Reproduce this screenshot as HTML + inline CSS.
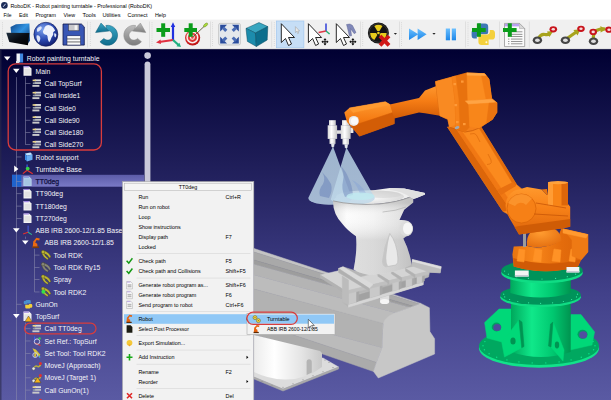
<!DOCTYPE html>
<html><head><meta charset="utf-8"><title>RoboDK - Robot painting turntable</title>
<style>
html,body{margin:0;padding:0;background:#fff;overflow:hidden}
svg{display:block}
text{font-family:"Liberation Sans", "DejaVu Sans", sans-serif;}
</style></head><body>
<svg width="611" height="400" viewBox="0 0 611 400">
<defs>
<linearGradient id="bg" x1="0" y1="49" x2="0" y2="400" gradientUnits="userSpaceOnUse">
<stop offset="0" stop-color="#000032"/><stop offset="0.32" stop-color="#1e1d58"/><stop offset="0.7" stop-color="#42418a"/><stop offset="1" stop-color="#5a5aa3"/></linearGradient>
</defs>
<rect x="0" y="0" width="611" height="400" fill="#ffffff"/>
<rect x="0" y="19.5" width="611" height="30" fill="#f0f0f0"/>
<rect x="0" y="49" width="611" height="351" fill="url(#bg)"/>
<defs>
<linearGradient id="gOr" x1="0" y1="0" x2="1" y2="1"><stop offset="0" stop-color="#ff9a2a"/><stop offset="1" stop-color="#e8690a"/></linearGradient>
<linearGradient id="gOrArm" x1="0" y1="0" x2="1" y2="0"><stop offset="0" stop-color="#d85f08"/><stop offset="0.45" stop-color="#ff8a1c"/><stop offset="1" stop-color="#f07410"/></linearGradient>
<linearGradient id="gTube" x1="0" y1="0" x2="0" y2="1"><stop offset="0" stop-color="#ff9a30"/><stop offset="0.5" stop-color="#f57c14"/><stop offset="1" stop-color="#d25c06"/></linearGradient>
<linearGradient id="gGreenCyl" x1="0" y1="0" x2="1" y2="0"><stop offset="0" stop-color="#00a85c"/><stop offset="0.35" stop-color="#10e88a"/><stop offset="0.7" stop-color="#00c870"/><stop offset="1" stop-color="#009450"/></linearGradient>
<linearGradient id="gWhiteCyl" x1="0" y1="0" x2="1" y2="0"><stop offset="0" stop-color="#d8d8d8"/><stop offset="0.4" stop-color="#ffffff"/><stop offset="1" stop-color="#c4c4c4"/></linearGradient>
<linearGradient id="gWhiteCyl2" x1="254" y1="0" x2="322" y2="0" gradientUnits="userSpaceOnUse"><stop offset="0" stop-color="#ececec"/><stop offset="0.3" stop-color="#ffffff"/><stop offset="0.7" stop-color="#e4e4e4"/><stop offset="1" stop-color="#c8c8c8"/></linearGradient>
<linearGradient id="gBowl" x1="0" y1="0" x2="1" y2="0"><stop offset="0" stop-color="#e6e6e6"/><stop offset="0.35" stop-color="#ffffff"/><stop offset="0.75" stop-color="#dcdcdc"/><stop offset="1" stop-color="#c0c0c0"/></linearGradient>
<linearGradient id="gCone" x1="0" y1="0" x2="0" y2="1"><stop offset="0" stop-color="#9fc8e6" stop-opacity="0.75"/><stop offset="1" stop-color="#7fa6d6" stop-opacity="0.6"/></linearGradient>
</defs>
<g id="scene">
<polygon points="254.0,248.5 420.8,303.4 419.3,304.0 254.0,252.0" fill="#c4c4c4" stroke="#c4c4c4" stroke-width="0.5" />
<polygon points="254.0,252.0 419.3,304.0 413.4,306.3 254.0,260.0" fill="#a9a9a9" stroke="#a9a9a9" stroke-width="0.5" />
<polygon points="254.0,260.0 413.4,306.3 410.4,307.4 254.0,264.3" fill="#9d9d9d" stroke="#9d9d9d" stroke-width="0.5" />
<polygon points="254.0,264.3 410.4,307.4 396.0,313.0 254.0,275.0" fill="#b4b4b4" stroke="#b4b4b4" stroke-width="0.5" />
<polygon points="254.0,275.0 396.0,313.0 383.6,324.0 254.0,289.0" fill="#bcbcbc" stroke="#bcbcbc" stroke-width="0.5" />
<polygon points="254.0,289.0 383.2,323.4 382.2,347.8 254.0,314.0" fill="#b2b2b2" stroke="#b2b2b2" stroke-width="0.5" />
<polygon points="254.0,314.0 382.2,347.8 376.5,362.5 254.0,322.0" fill="#bbbbbb" stroke="#bbbbbb" stroke-width="0.5" />
<polygon points="254.0,322.0 376.5,362.5 373.5,371.5 322.7,354.0 254.0,335.0" fill="#ababab" stroke="#ababab" stroke-width="0.5" />
<path d="M383.2,325 Q384,319 390,315.5 Q396,312.2 402,310.5 L420.8,303.4 L429.4,307.8 L429.9,331.6 L434.6,338.7 L434.6,354 L378.3,378 L373.5,371.5 L376.5,362.5 L382.2,347.8 Z" fill="#c7c7c7" stroke="#c7c7c7" stroke-width="0.5"/>
<polygon points="254.0,377.0 283.0,389.0 338.6,367.0 323.0,358.0 254.0,360.0" fill="#dcdcdc" stroke="#dcdcdc" stroke-width="0.5" />
<polygon points="254.0,379.0 283.0,391.0 338.6,369.0 338.6,367.0 283.0,389.0 254.0,377.0" fill="#aaaaaa" stroke="#aaaaaa" stroke-width="0.5" />
<circle cx="262.0" cy="381.5" r="0.55" fill="#8c8c8c"/>
<circle cx="272.0" cy="385.3" r="0.55" fill="#8c8c8c"/>
<circle cx="283.0" cy="387.3" r="0.55" fill="#8c8c8c"/>
<circle cx="293.0" cy="383.8" r="0.55" fill="#8c8c8c"/>
<circle cx="303.0" cy="379.8" r="0.55" fill="#8c8c8c"/>
<circle cx="313.0" cy="375.8" r="0.55" fill="#8c8c8c"/>
<circle cx="323.0" cy="371.8" r="0.55" fill="#8c8c8c"/>
<circle cx="333.0" cy="367.6" r="0.55" fill="#8c8c8c"/>
<circle cx="329.0" cy="362.5" r="0.55" fill="#8c8c8c"/>
<circle cx="325.0" cy="360.0" r="0.55" fill="#8c8c8c"/>
<path d="M254,335 L320,351 L322,353 L322,367 Q305,380 285,379.6 Q268,379 254,372 Z" fill="url(#gWhiteCyl2)" />
<path d="M306.6,362.5 Q306.6,359.2 309.2,359.2 Q311.8,359.2 311.8,362.5 L311.8,372.5 L306.6,375 Z" fill="#b4b4b4" />
<rect x="380" y="295" width="9.2" height="6.5" fill="#dedede"/>
<ellipse cx="384.6" cy="301.5" rx="4.6" ry="2.6" fill="#f6f6f6"/>
<polygon points="338.6,268.5 343.0,266.8 356.0,271.0 411.5,264.7 412.4,259.5 441.2,266.7 440.2,272.8 429.5,272.2 428.6,277.0 423.2,279.0 423.2,284.7 348.5,307.2 342.5,302.0 342.2,285.4 338.6,273.0" fill="#b6b6b6" stroke="#b6b6b6" stroke-width="0.5" />
<polygon points="343.0,300.0 348.5,304.5 423.2,282.0 419.0,278.0 352.0,296.0" fill="#c4c4c4" stroke="#c4c4c4" stroke-width="0.5" />
<polygon points="348.5,304.3 423.2,281.8 423.2,284.7 348.5,307.2" fill="#d6d6d6" stroke="#d6d6d6" stroke-width="0.5" />
<polygon points="349.0,297.5 422.0,276.0 422.5,281.8 349.0,304.0" fill="#a2a2a2" stroke="#a2a2a2" stroke-width="0.5" />
<polygon points="348.5,292.4 356.6,290.4 356.6,302.1 348.5,304.5" fill="#c9c9c9" stroke="#c9c9c9" stroke-width="0.5" />
<polygon points="356.6,290.4 358.8,289.4 358.8,300.5 356.6,302.1" fill="#a8a8a8" stroke="#a8a8a8" stroke-width="0.5" />
<polygon points="345.8,291.0 369.2,285.4 343.7,269.5 320.3,275.1" fill="#d4d4d4" stroke="#d4d4d4" stroke-width="0.5" />
<polygon points="345.8,291.0 369.2,285.4 369.2,288.6 345.8,294.2" fill="#c0c0c0" stroke="#c0c0c0" stroke-width="0.5" />
<polygon points="345.8,291.0 320.3,275.1 320.3,277.7 345.8,294.2" fill="#b2b2b2" stroke="#b2b2b2" stroke-width="0.5" />
<polygon points="370.0,287.2 380.0,284.8 380.0,295.1 370.0,298.1" fill="#c9c9c9" stroke="#c9c9c9" stroke-width="0.5" />
<polygon points="380.0,284.8 382.2,283.8 382.2,293.4 380.0,295.1" fill="#a8a8a8" stroke="#a8a8a8" stroke-width="0.5" />
<polygon points="367.4,285.8 387.2,281.1 375.3,273.6 355.5,278.4" fill="#d4d4d4" stroke="#d4d4d4" stroke-width="0.5" />
<polygon points="367.4,285.8 387.2,281.1 387.2,284.3 367.4,289.0" fill="#c0c0c0" stroke="#c0c0c0" stroke-width="0.5" />
<polygon points="367.4,285.8 355.5,278.4 355.5,281.0 367.4,289.0" fill="#b2b2b2" stroke="#b2b2b2" stroke-width="0.5" />
<polygon points="392.6,281.8 399.0,280.2 399.0,289.4 392.6,291.3" fill="#c9c9c9" stroke="#c9c9c9" stroke-width="0.5" />
<polygon points="399.0,280.2 401.2,279.2 401.2,287.8 399.0,289.4" fill="#a8a8a8" stroke="#a8a8a8" stroke-width="0.5" />
<polygon points="389.0,280.6 400.7,277.8 389.6,270.9 377.9,273.7" fill="#d4d4d4" stroke="#d4d4d4" stroke-width="0.5" />
<polygon points="389.0,280.6 400.7,277.8 400.7,281.0 389.0,283.8" fill="#c0c0c0" stroke="#c0c0c0" stroke-width="0.5" />
<polygon points="389.0,280.6 377.9,273.7 377.9,276.3 389.0,283.8" fill="#b2b2b2" stroke="#b2b2b2" stroke-width="0.5" />
<polygon points="406.0,278.6 412.4,277.0 412.4,285.3 406.0,287.2" fill="#c9c9c9" stroke="#c9c9c9" stroke-width="0.5" />
<polygon points="412.4,277.0 414.6,276.0 414.6,283.7 412.4,285.3" fill="#a8a8a8" stroke="#a8a8a8" stroke-width="0.5" />
<polygon points="401.6,277.6 414.2,274.6 404.0,268.2 391.4,271.2" fill="#d4d4d4" stroke="#d4d4d4" stroke-width="0.5" />
<polygon points="401.6,277.6 414.2,274.6 414.2,277.8 401.6,280.8" fill="#c0c0c0" stroke="#c0c0c0" stroke-width="0.5" />
<polygon points="401.6,277.6 391.4,271.2 391.4,273.8 401.6,280.8" fill="#b2b2b2" stroke="#b2b2b2" stroke-width="0.5" />
<polygon points="417.0,275.9 422.3,274.6 422.3,282.4 417.0,283.9" fill="#c9c9c9" stroke="#c9c9c9" stroke-width="0.5" />
<polygon points="422.3,274.6 424.5,273.6 424.5,280.8 422.3,282.4" fill="#a8a8a8" stroke="#a8a8a8" stroke-width="0.5" />
<polygon points="415.0,274.4 428.6,271.1 419.2,265.3 405.6,268.6" fill="#d4d4d4" stroke="#d4d4d4" stroke-width="0.5" />
<polygon points="415.0,274.4 428.6,271.1 428.6,274.3 415.0,277.6" fill="#c0c0c0" stroke="#c0c0c0" stroke-width="0.5" />
<polygon points="415.0,274.4 405.6,268.6 405.6,271.2 415.0,277.6" fill="#b2b2b2" stroke="#b2b2b2" stroke-width="0.5" />
<polygon points="338.6,268.5 343.0,266.8 373.0,284.5 369.2,288.3" fill="#dadada" stroke="#dadada" stroke-width="0.5" />
<polygon points="338.6,268.5 369.2,288.3 369.2,291.0 338.6,272.5" fill="#b0b0b0" stroke="#b0b0b0" stroke-width="0.5" />
<polygon points="342.2,276.0 348.5,280.0 348.5,304.5 342.5,302.0" fill="#bcbcbc" stroke="#bcbcbc" stroke-width="0.5" />
<polygon points="412.4,259.5 441.2,266.7 440.6,269.2 412.4,262.0" fill="#dedede" stroke="#dedede" stroke-width="0.5" />
<polygon points="412.4,262.0 440.6,269.2 440.2,272.8 429.5,272.2 412.4,266.0" fill="#bebebe" stroke="#bebebe" stroke-width="0.5" />
<defs>
<linearGradient id="gBowl2" x1="332" y1="0" x2="414" y2="0" gradientUnits="userSpaceOnUse"><stop offset="0" stop-color="#e0e0e0"/><stop offset="0.18" stop-color="#fcfcfc"/><stop offset="0.5" stop-color="#f4f4f4"/><stop offset="0.8" stop-color="#e4e4e4"/><stop offset="1" stop-color="#d2d2d2"/></linearGradient>
<linearGradient id="gBowlV" x1="0" y1="203" x2="0" y2="240" gradientUnits="userSpaceOnUse"><stop offset="0" stop-color="#9a9a9a" stop-opacity="0.35"/><stop offset="0.35" stop-color="#ffffff" stop-opacity="0"/><stop offset="1" stop-color="#8a8a8a" stop-opacity="0.25"/></linearGradient>
<radialGradient id="gInner" cx="0.45" cy="0.6" r="0.7"><stop offset="0" stop-color="#ffffff"/><stop offset="1" stop-color="#cfcfcf"/></radialGradient>
</defs>
<path d="M333.1,200.7 Q336,196 343,195.3 Q356,192 370,190.8 L389.8,188.1 L404.2,188.6 L425,193 L425,194.6 L416.5,198 L413.2,199 L409.6,197.1 Q397,202 379,203.8 Q352,205.2 333.1,200.7 Z" fill="#efefef" />
<path d="M389.8,188.1 L404.2,188.6 L425,193 L425,194.6 L416.5,198 L413.2,199 L409.6,197.1 Q403,191.5 389.8,190 Z" fill="#e0e0e0" />
<ellipse cx="370" cy="196.6" rx="34" ry="6.4" fill="url(#gInner)"/>
<ellipse cx="383" cy="194.5" rx="18" ry="3.6" fill="#d2d2d2" fill-opacity="0.55"/>
<defs>
<linearGradient id="gCone2" x1="0" y1="146" x2="0" y2="204" gradientUnits="userSpaceOnUse"><stop offset="0" stop-color="#b4cee2" stop-opacity="0.86"/><stop offset="1" stop-color="#c0d9ea" stop-opacity="0.82"/></linearGradient>
</defs>
<path d="M333,146.6 L308.4,197.8 A21.8,6.5 0 0 0 352,198.8 Z" fill="url(#gCone2)" />
<path d="M346.4,147.6 L330.8,199.4 A22,6.5 0 0 0 374.4,197 Z" fill="url(#gCone2)" />
<path d="M322,172 q4,6 1,12 q-5,6 -3,12 l9,2 q4,-8 2,-14 q-3,-6 -9,-12 z" fill="#6680b8" fill-opacity="0.5"/>
<path d="M340,165 q5,8 3,16 q-2,8 2,16 l8,-2 q-1,-10 -4,-16 q-3,-8 -9,-14 z" fill="#6680b8" fill-opacity="0.45"/>
<path d="M352,180 q5,5 8,14 l6,-1 q-5,-9 -14,-13 z" fill="#7f9fd8" fill-opacity="0.35"/>
<ellipse cx="360.5" cy="196.2" rx="14" ry="3.8" fill="#bfeaf0" fill-opacity="0.8"/>
<path d="M333.1,200.7 Q352,205.2 379,203.8 Q397,202 409.6,197.1 L413.2,199 L413.2,202.5 L404.2,209.7 L399.5,220 Q404,219.5 408,221 Q413.5,224 413,230 Q412,235.5 406,236.5 L403.3,238.6 Q410,252 411.5,264.7 Q396,273.5 369,275 Q358,273 353.6,269.6 Q357.5,250 356,236.3 Q347,230 342.5,224 Q332.8,214 333.1,200.7 Z" fill="url(#gBowl2)" />
<path d="M333.1,200.7 Q352,205.2 379,203.8 Q397,202 409.6,197.1 L413.2,199 L413.2,202.5 L404.2,209.7 L399.5,220 Q404,219.5 408,221 Q413.5,224 413,230 Q412,235.5 406,236.5 L403.3,238.6 Q410,252 411.5,264.7 Q396,273.5 369,275 Q358,273 353.6,269.6 Q357.5,250 356,236.3 Q347,230 342.5,224 Q332.8,214 333.1,200.7 Z" fill="url(#gBowlV)" />
<path d="M333.1,200.9 Q352,205.4 379,204 Q397,202.2 409.6,197.3" fill="none" stroke="#8c8c8c" stroke-width="0.7"/>
<path d="M382.6,212 Q396,211 406,207" fill="none" stroke="#a8a8a8" stroke-width="0.6"/>
<ellipse cx="406" cy="228.6" rx="6.6" ry="7.4" fill="#dcdcdc"/>
<ellipse cx="407.6" cy="228.6" rx="4.6" ry="6" fill="#f6f6f6"/>
<path d="M389.8,233.5 Q384,247 382.6,261 Q383,266.5 386,266.8 L396,265 Q398.5,263.5 397.9,258 Q397,243 389.8,233.5 Z" fill="#e9e9e9" stroke="#bdbdbd" stroke-width="0.7"/>
<path d="M389.8,233.5 Q384,247 382.6,261 Q383,266.5 386,266.8 L388,266.3 Q385.5,262 386.5,254 Q387.5,244 389.8,233.5 Z" fill="#c6c6c6" />
<rect x="329.0" y="120.2" width="6.8" height="5.4" fill="url(#gWhiteCyl)"/>
<rect x="327.7" y="125.3" width="9.4" height="13.6" fill="url(#gWhiteCyl)"/>
<rect x="329.5" y="138.8" width="6.0" height="5.1" fill="url(#gWhiteCyl)"/>
<polygon points="331.3,143.9 334.3,143.9 333.7,147.0 331.9,147.0" fill="#e4e8ec" stroke="#e4e8ec" stroke-width="0.5" />
<rect x="342.0" y="120.2" width="7.0" height="5.4" fill="url(#gWhiteCyl)"/>
<rect x="340.8" y="125.3" width="9.8" height="13.6" fill="url(#gWhiteCyl)"/>
<rect x="342.5" y="138.8" width="6.5" height="5.7" fill="url(#gWhiteCyl)"/>
<polygon points="344.7,144.5 347.7,144.5 347.1,148.0 345.3,148.0" fill="#e4e8ec" stroke="#e4e8ec" stroke-width="0.5" />
<rect x="337" y="130.3" width="4" height="3.5" fill="#dedede"/>
<rect x="350.4" y="127.5" width="3" height="5.5" fill="#e8e8e8"/>
<ellipse cx="539" cy="348.3" rx="60" ry="19.5" fill="#12e28a"/>
<ellipse cx="539" cy="346" rx="60" ry="19" fill="#00a860"/>
<polygon points="484.6,322.6 499.0,309.0 513.0,309.0 513.0,345.0 487.0,338.0" fill="#00d878" stroke="#00d878" stroke-width="0.5" />
<ellipse cx="496.5" cy="327" rx="4.8" ry="4.4" fill="#00a060"/><ellipse cx="497.2" cy="327.6" rx="3.9" ry="3.5" fill="#4c4c9a"/>
<polygon points="570.7,314.6 581.0,314.6 594.6,331.9 592.0,345.0 570.0,350.0" fill="#00d878" stroke="#00d878" stroke-width="0.5" />
<ellipse cx="582.5" cy="334.3" rx="5" ry="4.6" fill="#00a060"/><ellipse cx="583.2" cy="334.9" rx="4" ry="3.6" fill="#5050a0"/>
<path d="M511,300 L570.7,300 L570.7,352 Q541,362 511,352 Z" fill="url(#gGreenCyl)" />
<polygon points="519.0,320.0 501.8,342.5 504.5,357.0 521.7,347.8" fill="#00d878" stroke="#00d878" stroke-width="0.5" />
<polygon points="519.0,320.0 521.7,347.8 524.0,346.5 522.0,322.0" fill="#009452" stroke="#009452" stroke-width="0.5" />
<ellipse cx="513" cy="341" rx="2.6" ry="3.6" fill="#009452"/>
<polygon points="553.0,322.0 564.0,350.0 563.0,361.0 551.0,347.0" fill="#00d878" stroke="#00d878" stroke-width="0.5" />
<polygon points="553.0,322.0 551.0,347.0 548.5,346.0 550.5,324.0" fill="#009452" stroke="#009452" stroke-width="0.5" />
<ellipse cx="557" cy="345" rx="2.2" ry="3.4" fill="#009452"/>
<ellipse cx="540.6" cy="297.2" rx="40.3" ry="9.9" fill="#10dc84"/>
<ellipse cx="540.6" cy="294.9" rx="40.3" ry="9.9" fill="#00935a"/>
<path d="M510.3,274 L570.8,274 L570.8,293 Q541,302 510.3,293 Z" fill="url(#gGreenCyl)" />
<ellipse cx="542" cy="273" rx="40.8" ry="10.4" fill="#10dc84"/>
<ellipse cx="542" cy="270.4" rx="40.8" ry="10.4" fill="#00935a"/>
<circle cx="579.4" cy="271.1" r="0.6" fill="#36eca4"/>
<circle cx="575.6" cy="274.2" r="0.6" fill="#36eca4"/>
<circle cx="567.3" cy="276.7" r="0.6" fill="#36eca4"/>
<circle cx="555.6" cy="278.4" r="0.6" fill="#36eca4"/>
<circle cx="542.0" cy="279.0" r="0.6" fill="#36eca4"/>
<circle cx="528.4" cy="278.4" r="0.6" fill="#36eca4"/>
<circle cx="516.7" cy="276.7" r="0.6" fill="#36eca4"/>
<circle cx="508.4" cy="274.2" r="0.6" fill="#36eca4"/>
<circle cx="504.6" cy="271.1" r="0.6" fill="#36eca4"/>
<circle cx="577.5" cy="294.2" r="0.6" fill="#36eca4"/>
<circle cx="576.5" cy="296.9" r="0.6" fill="#36eca4"/>
<circle cx="571.6" cy="299.5" r="0.6" fill="#36eca4"/>
<circle cx="563.4" cy="301.5" r="0.6" fill="#36eca4"/>
<circle cx="552.6" cy="302.8" r="0.6" fill="#36eca4"/>
<circle cx="540.6" cy="303.3" r="0.6" fill="#36eca4"/>
<circle cx="528.6" cy="302.8" r="0.6" fill="#36eca4"/>
<circle cx="517.8" cy="301.5" r="0.6" fill="#36eca4"/>
<circle cx="509.6" cy="299.5" r="0.6" fill="#36eca4"/>
<circle cx="504.7" cy="296.9" r="0.6" fill="#36eca4"/>
<circle cx="503.7" cy="294.2" r="0.6" fill="#36eca4"/>
<circle cx="593.1" cy="341.6" r="0.7" fill="#0be48a"/>
<circle cx="595.0" cy="345.7" r="0.7" fill="#0be48a"/>
<circle cx="593.6" cy="349.8" r="0.7" fill="#0be48a"/>
<circle cx="588.9" cy="353.7" r="0.7" fill="#0be48a"/>
<circle cx="581.3" cy="357.2" r="0.7" fill="#0be48a"/>
<circle cx="571.1" cy="359.9" r="0.7" fill="#0be48a"/>
<circle cx="559.1" cy="361.9" r="0.7" fill="#0be48a"/>
<circle cx="545.8" cy="362.9" r="0.7" fill="#0be48a"/>
<circle cx="532.2" cy="362.9" r="0.7" fill="#0be48a"/>
<circle cx="518.9" cy="361.9" r="0.7" fill="#0be48a"/>
<circle cx="506.9" cy="359.9" r="0.7" fill="#0be48a"/>
<circle cx="496.7" cy="357.2" r="0.7" fill="#0be48a"/>
<circle cx="489.1" cy="353.7" r="0.7" fill="#0be48a"/>
<circle cx="484.4" cy="349.8" r="0.7" fill="#0be48a"/>
<circle cx="483.0" cy="345.7" r="0.7" fill="#0be48a"/>
<circle cx="484.9" cy="341.6" r="0.7" fill="#0be48a"/>
<polygon points="344.3,112.5 349.3,108.0 385.3,101.7 394.3,106.9 394.3,123.8 359.4,136.2 347.0,122.0" fill="url(#gTube)" />
<polygon points="349.3,108.0 385.3,101.7 390.0,104.6 353.0,112.5" fill="#ff9a30" stroke="#ff9a30" stroke-width="0.5" />
<polygon points="352.0,126.0 394.3,112.0 394.3,123.8 359.4,136.2" fill="#d35d06" stroke="#d35d06" stroke-width="0.5" />
<polygon points="389.8,104.6 419.0,97.9 425.0,90.4 436.4,86.0 445.0,84.0 445.0,117.0 439.9,115.8 425.0,113.2 419.0,112.5 394.3,118.5" fill="url(#gTube)" />
<circle cx="353.8" cy="120.9" r="5" fill="#e8e8e8"/>
<circle cx="354.5" cy="120.9" r="3.6" fill="#fafafa"/>
<polygon points="447.5,127.0 481.0,127.0 516.5,184.5 530.0,196.0 522.0,222.0 503.0,211.4" fill="#fb8a1e" stroke="#fb8a1e" stroke-width="0.5" />
<polygon points="447.5,127.0 455.0,127.0 510.5,210.0 503.0,211.4" fill="#dc660a" stroke="#dc660a" stroke-width="0.5" />
<polygon points="455.0,127.0 459.0,127.0 514.0,207.0 510.5,210.0" fill="#f07814" stroke="#f07814" stroke-width="0.5" />
<polygon points="478.5,127.0 481.0,127.0 516.5,184.5 514.5,186.5" fill="#e26c0c" stroke="#e26c0c" stroke-width="0.5" />
<path d="M470,134 L474,133.5 Q476,134 477,136 L480,142 M488,154 L491,160 Q492,163 490,164 L487,164.5" fill="none" stroke="#d86408" stroke-width="0.6"/>
<path d="M497,190 L513,182 L516,186 L501,195 Z" fill="#e87010" />
<polygon points="435.5,81.6 467.0,72.9 484.5,73.8 488.9,79.0 491.5,98.3 496.8,102.7 496.8,112.3 492.4,119.3 479.3,128.0 472.3,130.7 465.0,132.0 449.5,127.2 447.8,119.3 439.9,115.8" fill="#f4801a" stroke="#c65806" stroke-width="0.7"/>
<polygon points="435.5,81.6 452.0,77.0 455.0,100.0 456.0,124.0 449.5,127.2 447.8,119.3 439.9,115.8" fill="#f98a22" stroke="#f98a22" stroke-width="0.5" />
<polygon points="452.0,77.0 467.0,72.9 468.0,100.0 469.5,127.0 465.0,132.0 456.0,129.0 455.0,100.0" fill="#e8720e" stroke="#e8720e" stroke-width="0.5" />
<polygon points="452.0,77.0 455.5,76.0 458.5,100.0 459.5,128.0 456.0,129.0 455.0,100.0" fill="#f6821a" stroke="#f6821a" stroke-width="0.5" />
<polygon points="467.0,72.9 484.5,73.8 488.9,79.0 491.5,98.3 467.8,100.5" fill="#fb8c20" stroke="#fb8c20" stroke-width="0.5" />
<polygon points="481.0,73.6 484.5,73.8 488.9,79.0 491.5,98.3 486.0,99.0" fill="#f27c14" stroke="#f27c14" stroke-width="0.5" />
<polygon points="467.0,72.9 484.5,73.8 486.0,75.5 467.2,75.2" fill="#ffa848" stroke="#ffa848" stroke-width="0.5" />
<polygon points="465.3,100.9 492.4,99.2 496.8,102.7 468.8,104.4" fill="#ffa444" stroke="#ffa444" stroke-width="0.5" />
<polygon points="468.8,104.4 496.8,102.7 496.8,112.3 492.4,119.3 479.3,128.0 469.7,126.6" fill="#f8861a" stroke="#f8861a" stroke-width="0.5" />
<polygon points="489.0,103.2 496.8,102.7 496.8,112.3 492.4,119.3 486.5,123.2" fill="#ea7410" stroke="#ea7410" stroke-width="0.5" />
<rect x="453.5" y="83.0" width="2.6" height="2.2" fill="#ff9a38"/>
<rect x="461.0" y="80.5" width="2.6" height="2.2" fill="#ff9a38"/>
<rect x="454.5" y="104.0" width="2.6" height="2.2" fill="#ff9a38"/>
<rect x="456.0" y="121.0" width="2.6" height="2.2" fill="#ff9a38"/>
<rect x="463.0" y="123.0" width="2.6" height="2.2" fill="#ff9a38"/>
<ellipse cx="457" cy="127.6" rx="2.4" ry="1.4" transform="rotate(-20 457 127.6)" fill="#a0a8b0"/>
<defs>
<linearGradient id="gBase" x1="512" y1="0" x2="588" y2="0" gradientUnits="userSpaceOnUse"><stop offset="0" stop-color="#e87410"/><stop offset="0.3" stop-color="#f8861a"/><stop offset="0.65" stop-color="#e46c0c"/><stop offset="1" stop-color="#d86208"/></linearGradient>
<linearGradient id="gSh" x1="0" y1="186" x2="0" y2="234" gradientUnits="userSpaceOnUse"><stop offset="0" stop-color="#ff9a2e"/><stop offset="0.45" stop-color="#f88218"/><stop offset="1" stop-color="#dc640a"/></linearGradient>
<radialGradient id="gDome" cx="0.4" cy="0.3" r="0.8"><stop offset="0" stop-color="#ff9c30"/><stop offset="1" stop-color="#e26a0c"/></radialGradient>
</defs>
<path d="M513.7,246.6 L512.4,254.5 L513.7,266.4 Q546,276 578,266.4 L581.3,259.8 L588,251.9 L588,234.6 L561.4,228 L556,243 Q540,250 527,246 Z" fill="url(#gBase)" />
<path d="M513.2,258 Q546,268 580.5,259.5 L578,266.4 Q546,276 513.7,266.4 Z" fill="#d05a06" />
<polygon points="519.0,249.0 525.0,250.0 524.0,262.0 517.0,261.0" fill="#ff9226" stroke="#ff9226" stroke-width="0.5" />
<polygon points="535.0,249.0 542.0,250.0 541.0,262.0 533.0,261.0" fill="#ff9226" stroke="#ff9226" stroke-width="0.5" />
<polygon points="554.0,249.0 561.0,250.0 560.0,262.0 552.0,261.0" fill="#ff9226" stroke="#ff9226" stroke-width="0.5" />
<polygon points="571.0,249.0 576.0,250.0 575.0,262.0 569.0,261.0" fill="#ff9226" stroke="#ff9226" stroke-width="0.5" />
<polygon points="563.0,229.0 588.0,234.6 588.0,251.9 581.3,259.8 572.0,256.0 572.0,240.0" fill="#ee7a14" stroke="#ee7a14" stroke-width="0.5" />
<polygon points="563.0,229.0 588.0,234.6 586.0,238.0 563.0,233.0" fill="#ff9a30" stroke="#ff9a30" stroke-width="0.5" />
<path d="M527,246 Q525,229 544,226.7 Q561,227 561.4,241 Q545,250 527,246 Z" fill="url(#gDome)" />
<rect x="523" y="233" width="3" height="14" fill="#9c9c9c"/>
<path d="M519,189.6 L527,187 L541.6,189.6 L546.9,194.9 L548,194.9 L548,182.4 L568,182.4 L568,204 L570.2,206.8 L570.2,226.7 L561.4,228.5 L519,234.6 L509.8,218.7 Q502,205 508.5,196 Q513,190 519,189.6 Z" fill="url(#gSh)" />
<path d="M519,226 L570.2,219 L570.2,226.7 L561.4,228.5 L519,234.6 L514.5,227 Z" fill="#cf5c06" />
<rect x="548" y="182.4" width="20" height="23" fill="#f88416"/>
<rect x="548" y="182.4" width="5" height="23" fill="#ff9c34"/>
<rect x="561.5" y="182.4" width="6.5" height="23" fill="#dc660a"/>
<ellipse cx="558" cy="182.6" rx="10" ry="1.6" fill="#ffa23c"/>
<path d="M541.6,189.6 L547,189 L548,195 L546.9,194.9 Z" fill="#e87410" />
<circle cx="521.5" cy="208.5" r="14.5" fill="#f68016"/>
<circle cx="521.5" cy="208.5" r="14.5" fill="none" stroke="#d96408" stroke-width="0.8"/>
<path d="M508,203 A14.5,14.5 0 0 1 532,198.5 L526,205 A7,7 0 0 0 515,206 Z" fill="#ffa03a" fill-opacity="0.6"/>
<path d="M536,203 L566,208 M534,214 L568,216" fill="none" stroke="#c85606" stroke-width="0.8"/>
<rect x="514.9" y="270.5" width="13.8" height="6" fill="#f4f4f4"/>
<rect x="514.9" y="275" width="13.8" height="1.6" fill="#c8ccd4"/>
<rect x="566.5" y="267" width="12.8" height="5.4" fill="#f4f4f4"/>
<rect x="566.5" y="271" width="12.8" height="1.5" fill="#c8ccd4"/>
</g>
<defs>
<radialGradient id="gGlobe" cx="0.38" cy="0.3" r="0.75"><stop offset="0" stop-color="#7fa4ee"/><stop offset="0.55" stop-color="#2c4cb4"/><stop offset="1" stop-color="#101c6c"/></radialGradient>
<linearGradient id="gFolderB" x1="0" y1="0" x2="1" y2="1"><stop offset="0" stop-color="#0e4488"/><stop offset="0.45" stop-color="#2f92e0"/><stop offset="1" stop-color="#0a2c64"/></linearGradient>
<linearGradient id="gFolderF" x1="0" y1="0" x2="1" y2="1"><stop offset="0" stop-color="#203040"/><stop offset="0.5" stop-color="#080c14"/><stop offset="1" stop-color="#000000"/></linearGradient>
<linearGradient id="gUndo" x1="0" y1="0" x2="0" y2="1"><stop offset="0" stop-color="#3aa6c4"/><stop offset="1" stop-color="#0f6c8c"/></linearGradient>
<linearGradient id="gRedo" x1="0" y1="0" x2="0" y2="1"><stop offset="0" stop-color="#bdbdbd"/><stop offset="1" stop-color="#7c7c7c"/></linearGradient>
<linearGradient id="gFF" x1="0" y1="0" x2="0" y2="1"><stop offset="0" stop-color="#6cc0ff"/><stop offset="1" stop-color="#1c86e8"/></linearGradient>
<radialGradient id="gTarget" cx="0.4" cy="0.35" r="0.7"><stop offset="0" stop-color="#ff5a5a"/><stop offset="1" stop-color="#b80c0c"/></radialGradient>
</defs>
<g id="header">
<rect x="0" y="19.3" width="611" height="0.6" fill="#fafafa"/>
<rect x="0" y="48.6" width="611" height="0.6" fill="#d0d0d0"/>
<circle cx="4.4" cy="5.4" r="3.3" fill="#1c2c58"/>
<path d="M3.2,6.8 l2.4,-3 " stroke="#dfe6ff" stroke-width="0.9" fill="none"/>
<text x="10.5" y="7.6" font-size="6.2" fill="#000" textLength="141.5" lengthAdjust="spacingAndGlyphs">RoboDK - Robot painting turntable - Professional (RoboDK)</text>
<text x="3.5" y="17.4" font-size="6.2" fill="#000" textLength="8" lengthAdjust="spacingAndGlyphs">File</text>
<text x="19" y="17.4" font-size="6.2" fill="#000" textLength="9" lengthAdjust="spacingAndGlyphs">Edit</text>
<text x="35.5" y="17.4" font-size="6.2" fill="#000" textLength="20.5" lengthAdjust="spacingAndGlyphs">Program</text>
<text x="63.5" y="17.4" font-size="6.2" fill="#000" textLength="11.5" lengthAdjust="spacingAndGlyphs">View</text>
<text x="82.5" y="17.4" font-size="6.2" fill="#000" textLength="13.5" lengthAdjust="spacingAndGlyphs">Tools</text>
<text x="102.5" y="17.4" font-size="6.2" fill="#000" textLength="18" lengthAdjust="spacingAndGlyphs">Utilities</text>
<text x="127.5" y="17.4" font-size="6.2" fill="#000" textLength="20" lengthAdjust="spacingAndGlyphs">Connect</text>
<text x="155" y="17.4" font-size="6.2" fill="#000" textLength="11" lengthAdjust="spacingAndGlyphs">Help</text>
<rect x="2.0" y="22.5" width="0.6" height="0.6" fill="#b0b0b0"/>
<rect x="2.0" y="24.6" width="0.6" height="0.6" fill="#b0b0b0"/>
<rect x="2.0" y="26.6" width="0.6" height="0.6" fill="#b0b0b0"/>
<rect x="2.0" y="28.6" width="0.6" height="0.6" fill="#b0b0b0"/>
<rect x="2.0" y="30.7" width="0.6" height="0.6" fill="#b0b0b0"/>
<rect x="2.0" y="32.8" width="0.6" height="0.6" fill="#b0b0b0"/>
<rect x="2.0" y="34.8" width="0.6" height="0.6" fill="#b0b0b0"/>
<rect x="2.0" y="36.8" width="0.6" height="0.6" fill="#b0b0b0"/>
<rect x="2.0" y="38.9" width="0.6" height="0.6" fill="#b0b0b0"/>
<rect x="2.0" y="41.0" width="0.6" height="0.6" fill="#b0b0b0"/>
<rect x="2.0" y="43.0" width="0.6" height="0.6" fill="#b0b0b0"/>
<rect x="2.0" y="45.0" width="0.6" height="0.6" fill="#b0b0b0"/>
<rect x="87.3" y="21.5" width="0.6" height="26" fill="#d4d4d4"/>
<rect x="149.1" y="21.5" width="0.6" height="26" fill="#d4d4d4"/>
<rect x="210.0" y="21.5" width="0.6" height="26" fill="#d4d4d4"/>
<rect x="271.5" y="21.5" width="0.6" height="26" fill="#d4d4d4"/>
<rect x="360.0" y="21.5" width="0.6" height="26" fill="#d4d4d4"/>
<rect x="399.1" y="21.5" width="0.6" height="26" fill="#d4d4d4"/>
<rect x="465.1" y="21.5" width="0.6" height="26" fill="#d4d4d4"/>
<rect x="89.9" y="22.5" width="0.6" height="0.6" fill="#b0b0b0"/>
<rect x="89.9" y="24.6" width="0.6" height="0.6" fill="#b0b0b0"/>
<rect x="89.9" y="26.6" width="0.6" height="0.6" fill="#b0b0b0"/>
<rect x="89.9" y="28.6" width="0.6" height="0.6" fill="#b0b0b0"/>
<rect x="89.9" y="30.7" width="0.6" height="0.6" fill="#b0b0b0"/>
<rect x="89.9" y="32.8" width="0.6" height="0.6" fill="#b0b0b0"/>
<rect x="89.9" y="34.8" width="0.6" height="0.6" fill="#b0b0b0"/>
<rect x="89.9" y="36.8" width="0.6" height="0.6" fill="#b0b0b0"/>
<rect x="89.9" y="38.9" width="0.6" height="0.6" fill="#b0b0b0"/>
<rect x="89.9" y="41.0" width="0.6" height="0.6" fill="#b0b0b0"/>
<rect x="89.9" y="43.0" width="0.6" height="0.6" fill="#b0b0b0"/>
<rect x="89.9" y="45.0" width="0.6" height="0.6" fill="#b0b0b0"/>
<rect x="151.7" y="22.5" width="0.6" height="0.6" fill="#b0b0b0"/>
<rect x="151.7" y="24.6" width="0.6" height="0.6" fill="#b0b0b0"/>
<rect x="151.7" y="26.6" width="0.6" height="0.6" fill="#b0b0b0"/>
<rect x="151.7" y="28.6" width="0.6" height="0.6" fill="#b0b0b0"/>
<rect x="151.7" y="30.7" width="0.6" height="0.6" fill="#b0b0b0"/>
<rect x="151.7" y="32.8" width="0.6" height="0.6" fill="#b0b0b0"/>
<rect x="151.7" y="34.8" width="0.6" height="0.6" fill="#b0b0b0"/>
<rect x="151.7" y="36.8" width="0.6" height="0.6" fill="#b0b0b0"/>
<rect x="151.7" y="38.9" width="0.6" height="0.6" fill="#b0b0b0"/>
<rect x="151.7" y="41.0" width="0.6" height="0.6" fill="#b0b0b0"/>
<rect x="151.7" y="43.0" width="0.6" height="0.6" fill="#b0b0b0"/>
<rect x="151.7" y="45.0" width="0.6" height="0.6" fill="#b0b0b0"/>
<rect x="212.1" y="22.5" width="0.6" height="0.6" fill="#b0b0b0"/>
<rect x="212.1" y="24.6" width="0.6" height="0.6" fill="#b0b0b0"/>
<rect x="212.1" y="26.6" width="0.6" height="0.6" fill="#b0b0b0"/>
<rect x="212.1" y="28.6" width="0.6" height="0.6" fill="#b0b0b0"/>
<rect x="212.1" y="30.7" width="0.6" height="0.6" fill="#b0b0b0"/>
<rect x="212.1" y="32.8" width="0.6" height="0.6" fill="#b0b0b0"/>
<rect x="212.1" y="34.8" width="0.6" height="0.6" fill="#b0b0b0"/>
<rect x="212.1" y="36.8" width="0.6" height="0.6" fill="#b0b0b0"/>
<rect x="212.1" y="38.9" width="0.6" height="0.6" fill="#b0b0b0"/>
<rect x="212.1" y="41.0" width="0.6" height="0.6" fill="#b0b0b0"/>
<rect x="212.1" y="43.0" width="0.6" height="0.6" fill="#b0b0b0"/>
<rect x="212.1" y="45.0" width="0.6" height="0.6" fill="#b0b0b0"/>
<rect x="273.9" y="22.5" width="0.6" height="0.6" fill="#b0b0b0"/>
<rect x="273.9" y="24.6" width="0.6" height="0.6" fill="#b0b0b0"/>
<rect x="273.9" y="26.6" width="0.6" height="0.6" fill="#b0b0b0"/>
<rect x="273.9" y="28.6" width="0.6" height="0.6" fill="#b0b0b0"/>
<rect x="273.9" y="30.7" width="0.6" height="0.6" fill="#b0b0b0"/>
<rect x="273.9" y="32.8" width="0.6" height="0.6" fill="#b0b0b0"/>
<rect x="273.9" y="34.8" width="0.6" height="0.6" fill="#b0b0b0"/>
<rect x="273.9" y="36.8" width="0.6" height="0.6" fill="#b0b0b0"/>
<rect x="273.9" y="38.9" width="0.6" height="0.6" fill="#b0b0b0"/>
<rect x="273.9" y="41.0" width="0.6" height="0.6" fill="#b0b0b0"/>
<rect x="273.9" y="43.0" width="0.6" height="0.6" fill="#b0b0b0"/>
<rect x="273.9" y="45.0" width="0.6" height="0.6" fill="#b0b0b0"/>
<rect x="362.5" y="22.5" width="0.6" height="0.6" fill="#b0b0b0"/>
<rect x="362.5" y="24.6" width="0.6" height="0.6" fill="#b0b0b0"/>
<rect x="362.5" y="26.6" width="0.6" height="0.6" fill="#b0b0b0"/>
<rect x="362.5" y="28.6" width="0.6" height="0.6" fill="#b0b0b0"/>
<rect x="362.5" y="30.7" width="0.6" height="0.6" fill="#b0b0b0"/>
<rect x="362.5" y="32.8" width="0.6" height="0.6" fill="#b0b0b0"/>
<rect x="362.5" y="34.8" width="0.6" height="0.6" fill="#b0b0b0"/>
<rect x="362.5" y="36.8" width="0.6" height="0.6" fill="#b0b0b0"/>
<rect x="362.5" y="38.9" width="0.6" height="0.6" fill="#b0b0b0"/>
<rect x="362.5" y="41.0" width="0.6" height="0.6" fill="#b0b0b0"/>
<rect x="362.5" y="43.0" width="0.6" height="0.6" fill="#b0b0b0"/>
<rect x="362.5" y="45.0" width="0.6" height="0.6" fill="#b0b0b0"/>
<rect x="401.4" y="22.5" width="0.6" height="0.6" fill="#b0b0b0"/>
<rect x="401.4" y="24.6" width="0.6" height="0.6" fill="#b0b0b0"/>
<rect x="401.4" y="26.6" width="0.6" height="0.6" fill="#b0b0b0"/>
<rect x="401.4" y="28.6" width="0.6" height="0.6" fill="#b0b0b0"/>
<rect x="401.4" y="30.7" width="0.6" height="0.6" fill="#b0b0b0"/>
<rect x="401.4" y="32.8" width="0.6" height="0.6" fill="#b0b0b0"/>
<rect x="401.4" y="34.8" width="0.6" height="0.6" fill="#b0b0b0"/>
<rect x="401.4" y="36.8" width="0.6" height="0.6" fill="#b0b0b0"/>
<rect x="401.4" y="38.9" width="0.6" height="0.6" fill="#b0b0b0"/>
<rect x="401.4" y="41.0" width="0.6" height="0.6" fill="#b0b0b0"/>
<rect x="401.4" y="43.0" width="0.6" height="0.6" fill="#b0b0b0"/>
<rect x="401.4" y="45.0" width="0.6" height="0.6" fill="#b0b0b0"/>
<rect x="467.7" y="22.5" width="0.6" height="0.6" fill="#b0b0b0"/>
<rect x="467.7" y="24.6" width="0.6" height="0.6" fill="#b0b0b0"/>
<rect x="467.7" y="26.6" width="0.6" height="0.6" fill="#b0b0b0"/>
<rect x="467.7" y="28.6" width="0.6" height="0.6" fill="#b0b0b0"/>
<rect x="467.7" y="30.7" width="0.6" height="0.6" fill="#b0b0b0"/>
<rect x="467.7" y="32.8" width="0.6" height="0.6" fill="#b0b0b0"/>
<rect x="467.7" y="34.8" width="0.6" height="0.6" fill="#b0b0b0"/>
<rect x="467.7" y="36.8" width="0.6" height="0.6" fill="#b0b0b0"/>
<rect x="467.7" y="38.9" width="0.6" height="0.6" fill="#b0b0b0"/>
<rect x="467.7" y="41.0" width="0.6" height="0.6" fill="#b0b0b0"/>
<rect x="467.7" y="43.0" width="0.6" height="0.6" fill="#b0b0b0"/>
<rect x="467.7" y="45.0" width="0.6" height="0.6" fill="#b0b0b0"/>
<rect x="499.0" y="21.5" width="0.6" height="26" fill="#d4d4d4"/>
<rect x="528.9" y="21.5" width="0.6" height="26" fill="#d4d4d4"/>
<polygon points="10.5,27 16,24.2 29.4,23.6 30,40.8 27,44.5 12,41" fill="url(#gFolderB)"/>
<polygon points="6.3,32.8 29.4,33 27.9,45.3 9.3,42" fill="url(#gFolderF)"/>
<circle cx="45.9" cy="34.3" r="12" fill="url(#gGlobe)"/>
<path d="M44.5,27.5 q1,-2.2 3.6,-2.4 q2.4,0.2 4.4,1.6 q2,1.8 2.6,4 q-1.4,0.4 -2,1.8 q0.6,2 -0.6,3.6 q-1.2,1.4 -1.6,3.2 q-0.6,2.2 -1.8,3 q-1.2,-1.6 -1.4,-4 q0.2,-2 -0.8,-3.2 q-2.4,0 -3.6,-1.8 q-0.8,-1.8 0.2,-3.2 q0.8,-1 1,-2.6 z" fill="#eef2fc"/>
<path d="M37.2,28.6 q1.6,-2 3.8,-2.4 q1.2,0.8 0.6,2.4 q-0.8,1.4 -2,2.2 q-1,1.2 -2.4,1 q-0.6,-1.6 0,-3.2 z M36.6,35.4 q1.8,-0.4 3,0.8 q1.2,1.6 0.6,3.4 q-0.6,1.8 -1.4,3 q-1.6,-1.4 -2,-3.6 q-0.6,-1.8 -0.2,-3.6 z M54.6,33 q1.4,0.4 1.8,1.8 q-0.2,1.6 -1,2.6 q-1,-0.6 -1.2,-2 q-0.2,-1.4 0.4,-2.4 z" fill="#dfe6f8"/>
<circle cx="45.9" cy="34.3" r="12" fill="none" stroke="#0c1450" stroke-width="0.6"/>
<path d="M63,24 h18.4 l2.9,2.9 v18.2 h-21.3 z" fill="#3856b4" stroke="#10184c" stroke-width="0.8"/>
<rect x="68.5" y="24.3" width="10.5" height="6.5" fill="#c8c8cc" stroke="#303040" stroke-width="0.5"/>
<rect x="74.6" y="25.3" width="2.6" height="4.6" fill="#f4f4f4"/>
<rect x="67" y="35.8" width="13.6" height="9.2" fill="#fafafa" stroke="#10184c" stroke-width="0.5"/>
<rect x="67" y="38.6" width="13.6" height="0.7" fill="#303030"/><rect x="67" y="41.6" width="13.6" height="0.7" fill="#303030"/>
<path d="M105.86,25.45 A10,10 0 1 1 99.94,41.73 L103.92,38.39 A4.8,4.8 0 1 0 106.77,30.57 Z" fill="url(#gUndo)" stroke="#0c5c78" stroke-width="0.5"/>
<polygon points="95.6,32.5 101.0,23.1 108.8,31.1" fill="url(#gUndo)" stroke="#0c5c78" stroke-width="0.5"/>
<path d="M135.54,25.45 A10,10 0 1 0 141.46,41.73 L137.48,38.39 A4.8,4.8 0 1 1 134.63,30.57 Z" fill="url(#gRedo)" stroke="#8a8a8a" stroke-width="0.5"/>
<polygon points="145.8,32.5 140.4,23.1 132.6,31.1" fill="url(#gRedo)" stroke="#8a8a8a" stroke-width="0.5"/>
<line x1="173" y1="40" x2="173" y2="25" stroke="#2030e0" stroke-width="2.2"/><polygon points="173,22.2 175.2,27 170.8,27" fill="#2030e0"/>
<line x1="173" y1="40" x2="159" y2="42" stroke="#e03040" stroke-width="2.2"/><polygon points="156,42.4 160.6,39.6 161,44" fill="#e03040"/>
<line x1="173" y1="40" x2="178.6" y2="45" stroke="#20b080" stroke-width="2.2"/><polygon points="181,47 176.4,46.2 179.4,42.8" fill="#20b080"/>
<rect x="156.5" y="28.0" width="13.5" height="4.0" fill="#0a9c1a"/>
<rect x="161.2" y="23.3" width="4.0" height="13.5" fill="#0a9c1a"/>
<circle cx="192.6" cy="37.8" r="7.6" fill="url(#gTarget)"/>
<circle cx="192.4" cy="37.4" r="5.3" fill="none" stroke="#f6eeee" stroke-width="1.5"/>
<circle cx="192.4" cy="37.4" r="1.9" fill="none" stroke="#f6eeee" stroke-width="1.1"/>
<line x1="192.8" y1="37" x2="205" y2="25.6" stroke="#5a5a3a" stroke-width="0.9"/>
<ellipse cx="205.6" cy="25" rx="2.6" ry="1.3" transform="rotate(-43 205.6 25)" fill="#a8d838" stroke="#5a7a1a" stroke-width="0.4"/>
<rect x="184.3" y="28.0" width="12.7" height="4.0" fill="#0a9c1a"/>
<rect x="188.7" y="23.3" width="4.0" height="13.5" fill="#0a9c1a"/>
<rect x="218.6" y="23.4" width="21.8" height="21.6" rx="1.6" fill="#e4e8ec" stroke="#b4b4b4" stroke-width="0.6"/>
<polygon points="220.2,24.8 227.0,24.8 220.2,31.6" fill="#2a4c9c"/>
<polygon points="224.0,26.4 227.4,29.8 225.2,32.0 221.8,28.6" fill="#4a6cb4"/>
<polygon points="238.8,24.8 232.0,24.8 238.8,31.6" fill="#2a4c9c"/>
<polygon points="235.0,26.4 231.6,29.8 233.8,32.0 237.2,28.6" fill="#4a6cb4"/>
<polygon points="220.2,43.6 227.0,43.6 220.2,36.8" fill="#2a4c9c"/>
<polygon points="224.0,42.0 227.4,38.6 225.2,36.4 221.8,39.8" fill="#4a6cb4"/>
<polygon points="238.8,43.6 232.0,43.6 238.8,36.8" fill="#2a4c9c"/>
<polygon points="235.0,42.0 231.6,38.6 233.8,36.4 237.2,39.8" fill="#4a6cb4"/>
<polygon points="246,28.4 259,22.6 267.8,26.6 255.4,33" fill="#38a6c0" stroke="#0a4c62" stroke-width="0.5"/>
<polygon points="246,28.4 255.4,33 256.4,46.5 247.4,41.4" fill="#1c8cac" stroke="#0a4c62" stroke-width="0.5"/>
<polygon points="255.4,33 267.8,26.6 267.2,40 256.4,46.5" fill="#0c6e8c" stroke="#0a4c62" stroke-width="0.5"/>
<rect x="276.3" y="21" width="27.6" height="26.8" fill="#c6def6" stroke="#9cc4ee" stroke-width="0.6"/>
<polygon points="281.3,23.7 281.3,42.5 285.5,38.5 288.5,45.5 291.5,44.0 288.5,37.5 294.5,37.5" fill="#fff" stroke="#111" stroke-width="0.90" stroke-linejoin="miter"/>
<polygon points="295.4,26.6 295.4,32.6 296.7,31.3 297.7,33.6 298.7,33.1 297.7,31.0 299.6,31.0" fill="#e8e8e8" stroke="#9a9a9a" stroke-width="0.50" stroke-linejoin="miter"/>
<polygon points="308.4,23.7 308.4,42.5 312.6,38.5 315.6,45.5 318.6,44.0 315.6,37.5 321.6,37.5" fill="#fff" stroke="#111" stroke-width="0.90" stroke-linejoin="miter"/>
<line x1="326" y1="31" x2="326" y2="23.4" stroke="#3040d8" stroke-width="1.5"/>
<line x1="326" y1="31" x2="318.6" y2="32.6" stroke="#e03848" stroke-width="1.5"/>
<line x1="326" y1="31" x2="329.6" y2="34" stroke="#28b070" stroke-width="1.5"/>
<path d="M322.0,41.8 h6 M325.0,38.8 v6" stroke="#111" stroke-width="1.1" fill="none"/>
<polygon points="321.4,41.8 323.2,43.3 323.2,40.3" fill="#111"/>
<polygon points="328.6,41.8 326.8,40.3 326.8,43.3" fill="#111"/>
<polygon points="325.0,38.2 326.5,40.0 323.5,40.0" fill="#111"/>
<polygon points="325.0,45.4 323.5,43.6 326.5,43.6" fill="#111"/>
<polygon points="336.3,23.7 336.3,42.5 340.5,38.5 343.5,45.5 346.5,44.0 343.5,37.5 349.5,37.5" fill="#fff" stroke="#111" stroke-width="0.90" stroke-linejoin="miter"/>
<path d="M346.5,24.5 q4,-1.5 6,1 l3.5,7 l-1.8,1.2 l-3.6,-5 l1,7 l-2.2,0.4 l-2,-8.4 z" fill="#8088b8" stroke="#50588a" stroke-width="0.4"/>
<path d="M349.9,41.8 h6 M352.9,38.8 v6" stroke="#111" stroke-width="1.1" fill="none"/>
<polygon points="349.3,41.8 351.1,43.3 351.1,40.3" fill="#111"/>
<polygon points="356.5,41.8 354.7,40.3 354.7,43.3" fill="#111"/>
<polygon points="352.9,38.2 354.4,40.0 351.4,40.0" fill="#111"/>
<polygon points="352.9,45.4 351.4,43.6 354.4,43.6" fill="#111"/>
<circle cx="378.4" cy="33" r="10.5" fill="#141414"/>
<circle cx="378.4" cy="33" r="9.3" fill="none" stroke="#3c3c3c" stroke-width="0.8"/>
<path d="M377.30,31.09 L374.30,25.90 A8.2,8.2 0 0 1 382.50,25.90 L379.50,31.09 Z" fill="#e8cc1c"/>
<path d="M380.60,33.00 L386.60,33.00 A8.2,8.2 0 0 1 382.50,40.10 L379.50,34.91 Z" fill="#e8cc1c"/>
<path d="M377.30,34.91 L374.30,40.10 A8.2,8.2 0 0 1 370.20,33.00 L376.20,33.00 Z" fill="#e8cc1c"/>
<circle cx="378.4" cy="33" r="1.3" fill="#e8cc1c"/>
<path d="M380,36 l9,9.4 M389,36 l-9,9.4" stroke="#d01818" stroke-width="3.9" fill="none"/>
<polygon points="393.8,33 397,33 395.4,34.8" fill="#222"/>
<polygon points="409,28.5 418.3,34.2 409,39.9" fill="url(#gFF)"/>
<polygon points="417.6,28.5 426.6,34.2 417.6,39.9" fill="url(#gFF)"/>
<polygon points="432.4,33 435.6,33 434,34.8" fill="#222"/>
<rect x="445.8" y="28.5" width="4.2" height="11.8" fill="url(#gFF)"/>
<rect x="451.8" y="28.5" width="4.2" height="11.8" fill="url(#gFF)"/>
<path d="M478,23.6 h7 q3.2,0 3.2,3.2 v5.4 q0,2 -2,2 h-7 q-2.4,0 -2.4,2.4 v2 h-2.6 q-2.6,0 -2.6,-3.6 v-2.6 q0,-3.4 3.2,-3.4 h3.2 z" fill="#3c78b4"/>
<path d="M488.6,45 h-7 q-3.2,0 -3.2,-3.2 v-5.4 q0,-2 2,-2 h7 q2.4,0 2.4,-2.4 v-2 h2.6 q2.6,0 2.6,3.6 v2.6 q0,3.4 -3.2,3.4 h-3.2 z" fill="#f4d03c"/>
<circle cx="486.4" cy="42.2" r="1" fill="#fff8d8"/>
<rect x="472.0" y="28.0" width="13.7" height="4.0" fill="#0a9c1a"/>
<rect x="476.9" y="23.3" width="4.0" height="13.5" fill="#0a9c1a"/>
<path d="M504.5,23.4 h15 l5.2,5.2 v18 h-20.2 z" fill="#fafafa" stroke="#8a8a8a" stroke-width="0.7"/>
<rect x="505" y="23.8" width="14" height="2.6" fill="#b8a0f0"/>
<polygon points="519.5,23.4 524.7,28.6 519.5,28.6" fill="#d8d8d8" stroke="#8a8a8a" stroke-width="0.4"/>
<rect x="511" y="31.5" width="11.4" height="0.7" fill="#6a6a6a"/>
<rect x="508" y="31.5" width="1.4" height="0.7" fill="#6a6a6a"/>
<rect x="511" y="33.9" width="11.4" height="0.7" fill="#6a6a6a"/>
<rect x="508" y="33.9" width="1.4" height="0.7" fill="#6a6a6a"/>
<rect x="511" y="36.3" width="11.4" height="0.7" fill="#6a6a6a"/>
<rect x="508" y="36.3" width="1.4" height="0.7" fill="#6a6a6a"/>
<rect x="511" y="38.7" width="11.4" height="0.7" fill="#6a6a6a"/>
<rect x="508" y="38.7" width="1.4" height="0.7" fill="#6a6a6a"/>
<rect x="511" y="41.1" width="11.4" height="0.7" fill="#6a6a6a"/>
<rect x="508" y="41.1" width="1.4" height="0.7" fill="#6a6a6a"/>
<rect x="511" y="43.5" width="11.4" height="0.7" fill="#6a6a6a"/>
<rect x="508" y="43.5" width="1.4" height="0.7" fill="#6a6a6a"/>
<rect x="503.0" y="28.0" width="13.6" height="4.0" fill="#0a9c1a"/>
<rect x="507.8" y="23.3" width="4.0" height="13.5" fill="#0a9c1a"/>
<path d="M538.5,38.5 q2.5,-5 6.5,-4 q3,0.8 5,-1.2" fill="none" stroke="#a8a41c" stroke-width="3.2"/>
<polygon points="553.4,31 549.4,37 547,31.4" fill="#a8a41c"/>
<ellipse cx="537.4" cy="40.3" rx="4.7" ry="3.8" fill="#464646"/><ellipse cx="537.4" cy="40.3" rx="2.4" ry="1.8" fill="#dedede"/>
<ellipse cx="553.3" cy="29.3" rx="3.8" ry="3.1" fill="#c8141c"/><ellipse cx="553.3" cy="29.3" rx="1.7" ry="1.3" fill="#f4dcdc"/>
<path d="M567,38.5 L577,31.5" fill="none" stroke="#a8a41c" stroke-width="3.2"/>
<polygon points="580.4,29.2 577.6,35.6 573.4,30" fill="#a8a41c"/>
<ellipse cx="565.4" cy="40.3" rx="4.7" ry="3.8" fill="#464646"/><ellipse cx="565.4" cy="40.3" rx="2.4" ry="1.8" fill="#dedede"/>
<ellipse cx="581.0" cy="28.8" rx="3.8" ry="3.1" fill="#c8141c"/><ellipse cx="581.0" cy="28.8" rx="1.7" ry="1.3" fill="#f4dcdc"/>
<path d="M593.4,39 q-0.5,-6 3,-8.5 q4,-2 9,-1.5" fill="none" stroke="#a8a41c" stroke-width="3.2"/>
<polygon points="606,29.4 600.4,26 600.6,32.6" fill="#a8a41c"/>
<ellipse cx="593.5" cy="41.3" rx="4.7" ry="3.8" fill="#464646"/><ellipse cx="593.5" cy="41.3" rx="2.4" ry="1.8" fill="#dedede"/>
<ellipse cx="593.2" cy="31.9" rx="3.8" ry="3.1" fill="#c8141c"/><ellipse cx="593.2" cy="31.9" rx="1.7" ry="1.3" fill="#f4dcdc"/>
<ellipse cx="609.0" cy="29.7" rx="3.8" ry="3.1" fill="#c8141c"/><ellipse cx="609.0" cy="29.7" rx="1.7" ry="1.3" fill="#f4dcdc"/>
</g>
<g id="tree">
<rect x="0" y="49" width="1.5" height="351" fill="#2a2a4a" fill-opacity="0.6"/>
<defs><linearGradient id="gSel" x1="0" y1="0" x2="0" y2="1"><stop offset="0" stop-color="#5c5ca8"/><stop offset="1" stop-color="#7a7ac6"/></linearGradient></defs>
<rect x="12" y="174.8" width="132" height="11.9" fill="url(#gSel)"/>
<rect x="12" y="174.8" width="9.3" height="11.9" fill="#1f62cc"/>
<rect x="16.2" y="77.1" width="0.55" height="322.9" fill="#8c8cae"/>
<rect x="25.2" y="77.1" width="0.55" height="67.6" fill="#8c8cae"/>
<rect x="25.5" y="83.1" width="5.0" height="0.55" fill="#8c8cae"/>
<rect x="25.5" y="95.3" width="5.0" height="0.55" fill="#8c8cae"/>
<rect x="25.5" y="107.6" width="5.0" height="0.55" fill="#8c8cae"/>
<rect x="25.5" y="119.9" width="5.0" height="0.55" fill="#8c8cae"/>
<rect x="25.5" y="132.2" width="5.0" height="0.55" fill="#8c8cae"/>
<rect x="25.5" y="144.4" width="5.0" height="0.55" fill="#8c8cae"/>
<rect x="16.5" y="156.7" width="5.0" height="0.55" fill="#8c8cae"/>
<rect x="16.5" y="181.2" width="5.0" height="0.55" fill="#8c8cae"/>
<rect x="16.5" y="193.5" width="5.0" height="0.55" fill="#8c8cae"/>
<rect x="16.5" y="205.8" width="5.0" height="0.55" fill="#8c8cae"/>
<rect x="16.5" y="218.0" width="5.0" height="0.55" fill="#8c8cae"/>
<rect x="16.5" y="303.9" width="5.0" height="0.55" fill="#8c8cae"/>
<rect x="25.2" y="236.6" width="0.55" height="2.3" fill="#8c8cae"/>
<rect x="34.2" y="248.8" width="0.55" height="43.1" fill="#8c8cae"/>
<rect x="34.5" y="254.8" width="5.0" height="0.55" fill="#8c8cae"/>
<rect x="34.5" y="267.1" width="5.0" height="0.55" fill="#8c8cae"/>
<rect x="34.5" y="279.4" width="5.0" height="0.55" fill="#8c8cae"/>
<rect x="34.5" y="291.7" width="5.0" height="0.55" fill="#8c8cae"/>
<rect x="25.2" y="322.5" width="0.55" height="77.5" fill="#8c8cae"/>
<rect x="25.5" y="328.5" width="5.0" height="0.55" fill="#8c8cae"/>
<rect x="25.5" y="340.7" width="5.0" height="0.55" fill="#8c8cae"/>
<rect x="25.5" y="353.0" width="5.0" height="0.55" fill="#8c8cae"/>
<rect x="25.5" y="365.3" width="5.0" height="0.55" fill="#8c8cae"/>
<rect x="25.5" y="377.6" width="5.0" height="0.55" fill="#8c8cae"/>
<rect x="25.5" y="389.8" width="5.0" height="0.55" fill="#8c8cae"/>
<rect x="25.5" y="402.1" width="5.0" height="0.55" fill="#8c8cae"/>
<polygon points="3.9,56.4 10.5,56.4 7.2,60.6" fill="#ffffff"/>
<rect x="16.5" y="53.5" width="3.6" height="9" fill="#f2f4f8"/>
<rect x="19.9" y="53.5" width="3.2" height="9" fill="#3f86e0"/>
<rect x="16.0" y="61.0" width="3" height="2" fill="#dfe3ea"/>
<text x="26.7" y="61.4" font-size="7.2" fill="#f4f4f8" textLength="72.8" lengthAdjust="spacingAndGlyphs">Robot painting turntable</text>
<polygon points="13.0,68.7 19.6,68.7 16.3,72.9" fill="#ffffff"/>
<path d="M23.5,66.2 h5.6 l2.4,2.4 v7.1 h-8 z" fill="#f4f4f4"/>
<rect x="23.9" y="66.2" width="5" height="1.1" fill="#9a7fe0"/>
<rect x="24.5" y="68.9" width="6" height="5.6" fill="#dcdcdc" fill-opacity="0.7"/>
<text x="35.5" y="73.7" font-size="7.2" fill="#f4f4f8" textLength="14.9" lengthAdjust="spacingAndGlyphs">Main</text>
<rect x="34.6" y="79.4" width="6.4" height="1.9" fill="#d9d9d9"/>
<rect x="34.6" y="82.1" width="6.4" height="1.9" fill="#b9bcc0"/>
<rect x="32.4" y="84.9" width="7" height="1.9" fill="#c9c9c9"/>
<rect x="32.6" y="79.6" width="3.4" height="1.6" fill="#e9d489"/>
<rect x="32.8" y="82.4" width="2.4" height="1.6" fill="#8f9aa5"/>
<text x="44.5" y="85.9" font-size="7.2" fill="#f4f4f8" textLength="37.2" lengthAdjust="spacingAndGlyphs">Call TopSurf</text>
<rect x="34.6" y="91.7" width="6.4" height="1.9" fill="#d9d9d9"/>
<rect x="34.6" y="94.4" width="6.4" height="1.9" fill="#b9bcc0"/>
<rect x="32.4" y="97.2" width="7" height="1.9" fill="#c9c9c9"/>
<rect x="32.6" y="91.9" width="3.4" height="1.6" fill="#e9d489"/>
<rect x="32.8" y="94.7" width="2.4" height="1.6" fill="#8f9aa5"/>
<text x="44.5" y="98.2" font-size="7.2" fill="#f4f4f8" textLength="35.9" lengthAdjust="spacingAndGlyphs">Call Inside1</text>
<rect x="34.6" y="104.0" width="6.4" height="1.9" fill="#d9d9d9"/>
<rect x="34.6" y="106.7" width="6.4" height="1.9" fill="#b9bcc0"/>
<rect x="32.4" y="109.5" width="7" height="1.9" fill="#c9c9c9"/>
<rect x="32.6" y="104.2" width="3.4" height="1.6" fill="#e9d489"/>
<rect x="32.8" y="107.0" width="2.4" height="1.6" fill="#8f9aa5"/>
<text x="44.5" y="110.5" font-size="7.2" fill="#f4f4f8" textLength="31.3" lengthAdjust="spacingAndGlyphs">Call Side0</text>
<rect x="34.6" y="116.2" width="6.4" height="1.9" fill="#d9d9d9"/>
<rect x="34.6" y="118.9" width="6.4" height="1.9" fill="#b9bcc0"/>
<rect x="32.4" y="121.7" width="7" height="1.9" fill="#c9c9c9"/>
<rect x="32.6" y="116.4" width="3.4" height="1.6" fill="#e9d489"/>
<rect x="32.8" y="119.2" width="2.4" height="1.6" fill="#8f9aa5"/>
<text x="44.5" y="122.7" font-size="7.2" fill="#f4f4f8" textLength="35.1" lengthAdjust="spacingAndGlyphs">Call Side90</text>
<rect x="34.6" y="128.5" width="6.4" height="1.9" fill="#d9d9d9"/>
<rect x="34.6" y="131.2" width="6.4" height="1.9" fill="#b9bcc0"/>
<rect x="32.4" y="134.0" width="7" height="1.9" fill="#c9c9c9"/>
<rect x="32.6" y="128.7" width="3.4" height="1.6" fill="#e9d489"/>
<rect x="32.8" y="131.5" width="2.4" height="1.6" fill="#8f9aa5"/>
<text x="44.5" y="135.0" font-size="7.2" fill="#f4f4f8" textLength="38.9" lengthAdjust="spacingAndGlyphs">Call Side180</text>
<rect x="34.6" y="140.8" width="6.4" height="1.9" fill="#d9d9d9"/>
<rect x="34.6" y="143.5" width="6.4" height="1.9" fill="#b9bcc0"/>
<rect x="32.4" y="146.3" width="7" height="1.9" fill="#c9c9c9"/>
<rect x="32.6" y="141.0" width="3.4" height="1.6" fill="#e9d489"/>
<rect x="32.8" y="143.8" width="2.4" height="1.6" fill="#8f9aa5"/>
<text x="44.5" y="147.3" font-size="7.2" fill="#f4f4f8" textLength="38.9" lengthAdjust="spacingAndGlyphs">Call Side270</text>
<polygon points="25.0,153.6 30.5,152.4 32.5,154.4 26.9,155.8" fill="#bfe3ff"/>
<polygon points="25.0,153.6 26.9,155.8 26.9,161.4 25.0,159.2" fill="#3b8ee8"/>
<polygon points="26.9,155.8 32.5,154.4 32.5,159.8 26.9,161.4" fill="#69aef2"/>
<text x="35.5" y="159.6" font-size="7.2" fill="#f4f4f8" textLength="43.1" lengthAdjust="spacingAndGlyphs">Robot support</text>
<polygon points="14.2,165.6 18.4,168.9 14.2,172.2" fill="#ffffff"/>
<line x1="27.1" y1="170.2" x2="27.1" y2="164.4" stroke="#3a5cf0" stroke-width="1.2"/>
<line x1="27.1" y1="170.2" x2="22.9" y2="173.6" stroke="#e23030" stroke-width="1.2"/>
<line x1="27.1" y1="170.2" x2="32.7" y2="173.8" stroke="#e23030" stroke-width="1.2"/>
<circle cx="27.7" cy="168.6" r="1.9" fill="#38d048"/>
<text x="35.5" y="171.8" font-size="7.2" fill="#f4f4f8" textLength="46.3" lengthAdjust="spacingAndGlyphs">Turntable Base</text>
<path d="M23.5,176.6 h5.6 l2.4,2.4 v7.1 h-8 z" fill="#f4f4f4"/>
<rect x="23.9" y="176.6" width="5" height="1.1" fill="#9a7fe0"/>
<rect x="24.5" y="179.3" width="6" height="5.6" fill="#dcdcdc" fill-opacity="0.7"/>
<text x="35.5" y="184.1" font-size="7.2" fill="#101040" stroke="#101040" stroke-width="0.25" textLength="23.7" lengthAdjust="spacingAndGlyphs">TT0deg</text>
<path d="M23.5,176.6 h5.6 l2.4,2.4 v7.1 h-8 z" fill="#5aa0e0" fill-opacity="0.45"/>
<path d="M23.5,188.9 h5.6 l2.4,2.4 v7.1 h-8 z" fill="#f4f4f4"/>
<rect x="23.9" y="188.9" width="5" height="1.1" fill="#9a7fe0"/>
<rect x="24.5" y="191.6" width="6" height="5.6" fill="#dcdcdc" fill-opacity="0.7"/>
<text x="35.5" y="196.4" font-size="7.2" fill="#f4f4f8" textLength="27.5" lengthAdjust="spacingAndGlyphs">TT90deg</text>
<path d="M23.5,201.1 h5.6 l2.4,2.4 v7.1 h-8 z" fill="#f4f4f4"/>
<rect x="23.9" y="201.1" width="5" height="1.1" fill="#9a7fe0"/>
<rect x="24.5" y="203.8" width="6" height="5.6" fill="#dcdcdc" fill-opacity="0.7"/>
<text x="35.5" y="208.6" font-size="7.2" fill="#f4f4f8" textLength="31.3" lengthAdjust="spacingAndGlyphs">TT180deg</text>
<path d="M23.5,213.4 h5.6 l2.4,2.4 v7.1 h-8 z" fill="#f4f4f4"/>
<rect x="23.9" y="213.4" width="5" height="1.1" fill="#9a7fe0"/>
<rect x="24.5" y="216.1" width="6" height="5.6" fill="#dcdcdc" fill-opacity="0.7"/>
<text x="35.5" y="220.9" font-size="7.2" fill="#f4f4f8" textLength="31.3" lengthAdjust="spacingAndGlyphs">TT270deg</text>
<polygon points="13.0,228.2 19.6,228.2 16.3,232.4" fill="#ffffff"/>
<line x1="28.1" y1="232.2" x2="28.1" y2="225.6" stroke="#4a64f0" stroke-width="0.9"/>
<line x1="28.1" y1="232.2" x2="23.1" y2="234.0" stroke="#e23030" stroke-width="1.1"/>
<line x1="28.1" y1="232.2" x2="31.9" y2="234.6" stroke="#30b890" stroke-width="1.1"/>
<text x="35.5" y="233.2" font-size="7.2" fill="#f4f4f8" textLength="86.9" lengthAdjust="spacingAndGlyphs">ABB IRB 2600-12/1.85 Base</text>
<polygon points="22.0,240.4 28.6,240.4 25.3,244.6" fill="#ffffff"/>
<path d="M33.2,241.4 l3.2,-3.6 l3.4,0.6 l-0.6,2 l-2.6,-0.4 l-1.4,2.6 l2,1.2 l0.4,3.6 h-5 l0.4,-3 z" fill="#ea6a12"/>
<rect x="32.6" y="246.4" width="6.4" height="1.6" fill="#7a3a0a"/>
<text x="44.5" y="245.4" font-size="7.2" fill="#f4f4f8" textLength="69.4" lengthAdjust="spacingAndGlyphs">ABB IRB 2600-12/1.85</text>
<path d="M42.6,250.5 Q48.4,251.1 51.0,256.9 L49.4,257.9 Q47.2,253.9 43.4,253.5 Z" fill="#bcb434" stroke="#3c3c14" stroke-width="0.35"/>
<path d="M41.6,252.1 Q42.4,257.3 47.6,259.9 L48.4,258.3 Q44.8,256.3 44.2,253.1 Z" fill="#bcb434" stroke="#3c3c14" stroke-width="0.35"/>
<circle cx="43.0" cy="251.9" r="1.7" fill="#bcb434" stroke="#3c3c14" stroke-width="0.35"/>
<text x="53.5" y="257.7" font-size="7.2" fill="#f4f4f8" textLength="29.0" lengthAdjust="spacingAndGlyphs">Tool RDK</text>
<path d="M42.6,262.8 Q48.4,263.4 51.0,269.2 L49.4,270.2 Q47.2,266.2 43.4,265.8 Z" fill="#85857a" stroke="#3c3c14" stroke-width="0.35"/>
<path d="M41.6,264.4 Q42.4,269.6 47.6,272.2 L48.4,270.6 Q44.8,268.6 44.2,265.4 Z" fill="#85857a" stroke="#3c3c14" stroke-width="0.35"/>
<circle cx="43.0" cy="264.2" r="1.7" fill="#85857a" stroke="#3c3c14" stroke-width="0.35"/>
<text x="53.5" y="270.0" font-size="7.2" fill="#f4f4f8" textLength="46.9" lengthAdjust="spacingAndGlyphs">Tool RDK Ry15</text>
<path d="M42.6,275.1 Q48.4,275.7 51.0,281.5 L49.4,282.5 Q47.2,278.5 43.4,278.1 Z" fill="#bcb434" stroke="#3c3c14" stroke-width="0.35"/>
<path d="M41.6,276.7 Q42.4,281.9 47.6,284.5 L48.4,282.9 Q44.8,280.9 44.2,277.7 Z" fill="#bcb434" stroke="#3c3c14" stroke-width="0.35"/>
<circle cx="43.0" cy="276.5" r="1.7" fill="#bcb434" stroke="#3c3c14" stroke-width="0.35"/>
<text x="53.5" y="282.3" font-size="7.2" fill="#f4f4f8" textLength="17.9" lengthAdjust="spacingAndGlyphs">Spray</text>
<path d="M42.6,287.3 Q48.4,287.9 51.0,293.7 L49.4,294.7 Q47.2,290.7 43.4,290.3 Z" fill="#bcb434" stroke="#3c3c14" stroke-width="0.35"/>
<path d="M41.6,288.9 Q42.4,294.1 47.6,296.7 L48.4,295.1 Q44.8,293.1 44.2,289.9 Z" fill="#bcb434" stroke="#3c3c14" stroke-width="0.35"/>
<circle cx="43.0" cy="288.7" r="1.7" fill="#bcb434" stroke="#3c3c14" stroke-width="0.35"/>
<circle cx="43.4" cy="291.7" r="2" fill="#38e048"/>
<text x="53.5" y="294.5" font-size="7.2" fill="#f4f4f8" textLength="32.8" lengthAdjust="spacingAndGlyphs">Tool RDK2</text>
<g transform="translate(4.48 48.67) scale(0.84)">
<path d="M25.7,299.2 h4.2 q1.4,0 1.4,1.4 v2.8 h-4.6 v1 h-2.4 q-1.4,0 -1.4,-1.6 v-1.2 q0,-1.6 1.6,-1.6 h1.2 z" fill="#4a8fd0"/>
<path d="M30.3,309.2 h-4.2 q-1.4,0 -1.4,-1.4 v-2.8 h4.6 v-1 h2.4 q1.4,0 1.4,1.6 v1.2 q0,1.6 -1.6,1.6 h-1.2 z" fill="#f2cf3a"/>
</g>
<text x="35.5" y="306.8" font-size="7.2" fill="#f4f4f8" textLength="22.1" lengthAdjust="spacingAndGlyphs">GunOn</text>
<polygon points="13.0,314.1 19.6,314.1 16.3,318.3" fill="#ffffff"/>
<path d="M23.5,311.6 h5.6 l2.4,2.4 v7.1 h-8 z" fill="#f4f4f4"/>
<rect x="23.9" y="311.6" width="5" height="1.1" fill="#9a7fe0"/>
<rect x="24.5" y="314.3" width="6" height="5.6" fill="#dcdcdc" fill-opacity="0.7"/>
<polygon points="28.5,316.0 32.1,321.7 24.9,321.7" fill="#f2b21c" stroke="#2a2a2a" stroke-width="0.4"/>
<text x="35.5" y="319.1" font-size="7.2" fill="#f4f4f8" textLength="23.7" lengthAdjust="spacingAndGlyphs">TopSurf</text>
<rect x="34.6" y="324.8" width="6.4" height="1.9" fill="#d9d9d9"/>
<rect x="34.6" y="327.5" width="6.4" height="1.9" fill="#b9bcc0"/>
<rect x="32.4" y="330.3" width="7" height="1.9" fill="#c9c9c9"/>
<rect x="32.6" y="325.0" width="3.4" height="1.6" fill="#e9d489"/>
<rect x="32.8" y="327.8" width="2.4" height="1.6" fill="#8f9aa5"/>
<text x="44.5" y="331.3" font-size="7.2" fill="#f4f4f8" textLength="37.2" lengthAdjust="spacingAndGlyphs">Call TT0deg</text>
<line x1="34.6" y1="343.0" x2="34.6" y2="336.4" stroke="#3a5cf0" stroke-width="1.1"/>
<line x1="34.6" y1="343.0" x2="40.6" y2="345.4" stroke="#e23030" stroke-width="1.1"/>
<circle cx="37.0" cy="341.6" r="2.7" fill="none" stroke="#c8d2e8" stroke-width="1"/>
<circle cx="39.6" cy="338.4" r="1.2" fill="#38d048"/>
<text x="44.5" y="343.6" font-size="7.2" fill="#f4f4f8" textLength="52.1" lengthAdjust="spacingAndGlyphs">Set Ref.: TopSurf</text>
<path d="M32.4,348.3 l3.4,1.2 l4.6,5.2 l-1.6,2 l-2.4,-2.6 l-0.6,2.8 l-1.8,-0.4 l0.6,-4 z" fill="#d8c43a"/>
<circle cx="35.2" cy="355.1" r="2.4" fill="none" stroke="#c8d2e8" stroke-width="0.9"/>
<path d="M38.2,354.5 l2.4,2.6 l-1.2,1 z" fill="#3ab0e8"/>
<text x="44.5" y="355.9" font-size="7.2" fill="#f4f4f8" textLength="61.1" lengthAdjust="spacingAndGlyphs">Set Tool: Tool RDK2</text>
<path d="M33.4,368.4 q2.2,-3.4 4,-2 q1.4,1 3.2,-1.6" fill="none" stroke="#b8b03a" stroke-width="1.5"/>
<circle cx="33.6" cy="368.6" r="1.6" fill="#e8e8e8" stroke="#555" stroke-width="0.5"/>
<circle cx="40.4" cy="363.4" r="1.5" fill="#e03030"/>
<text x="44.5" y="368.2" font-size="7.2" fill="#f4f4f8" textLength="56.0" lengthAdjust="spacingAndGlyphs">MoveJ (Approach)</text>
<path d="M33.4,380.6 q2.2,-3.4 4,-2 q1.4,1 3.2,-1.6" fill="none" stroke="#b8b03a" stroke-width="1.5"/>
<circle cx="33.6" cy="380.8" r="1.6" fill="#e8e8e8" stroke="#555" stroke-width="0.5"/>
<circle cx="40.4" cy="375.6" r="1.5" fill="#e03030"/>
<polygon points="37.6,377.2 41.0,382.8 34.2,382.8" fill="#f2b21c" stroke="#2a2a2a" stroke-width="0.4"/>
<text x="44.5" y="380.4" font-size="7.2" fill="#f4f4f8" textLength="51.5" lengthAdjust="spacingAndGlyphs">MoveJ (Target 1)</text>
<rect x="34.6" y="386.2" width="6.4" height="1.9" fill="#d9d9d9"/>
<rect x="34.6" y="388.9" width="6.4" height="1.9" fill="#b9bcc0"/>
<rect x="32.4" y="391.7" width="7" height="1.9" fill="#c9c9c9"/>
<rect x="32.6" y="386.4" width="3.4" height="1.6" fill="#e9d489"/>
<rect x="32.8" y="389.2" width="2.4" height="1.6" fill="#8f9aa5"/>
<text x="44.5" y="392.7" font-size="7.2" fill="#f4f4f8" textLength="44.2" lengthAdjust="spacingAndGlyphs">Call GunOn(1)</text>
<path d="M33.4,405.2 q2.2,-3.4 4,-2 q1.4,1 3.2,-1.6" fill="none" stroke="#b8b03a" stroke-width="1.5"/>
<circle cx="33.6" cy="405.4" r="1.6" fill="#e8e8e8" stroke="#555" stroke-width="0.5"/>
<circle cx="40.4" cy="400.2" r="1.5" fill="#e03030"/>
<rect x="8.2" y="63.8" width="93.2" height="86.2" rx="7.5" ry="7.5" fill="none" stroke="#d93c3c" stroke-width="1.3"/>
<rect x="24.5" y="323.2" width="71.5" height="10.6" rx="5.3" ry="5.3" fill="none" stroke="#d93c3c" stroke-width="1.2"/>
<circle cx="147.6" cy="55.6" r="3.3" fill="#cacada"/>
<rect x="144.6" y="61.4" width="5.8" height="125" rx="2.9" fill="#cacada"/>
</g>
<g id="ctx">
<rect x="122.5" y="181.6" width="131.3" height="219" fill="#f2f2f2" stroke="#a8a8a8" stroke-width="0.6"/>
<rect x="124.6" y="183.2" width="127" height="7.4" fill="#f5f5f5" stroke="#adadad" stroke-width="0.5"/>
<text x="178.7" y="189.1" font-size="5.9" fill="#000" textLength="18.6" lengthAdjust="spacingAndGlyphs">TT0deg</text>
<rect x="124" y="314.2" width="128.3" height="9.6" fill="#90c8f6"/>
<text x="138.4" y="198.7" font-size="5.9" fill="#000" textLength="9.9" lengthAdjust="spacingAndGlyphs">Run</text>
<text x="225.5" y="198.7" font-size="5.9" fill="#000" textLength="15.5" lengthAdjust="spacingAndGlyphs">Ctrl+R</text>
<text x="138.4" y="208.6" font-size="5.9" fill="#000" textLength="31.2" lengthAdjust="spacingAndGlyphs">Run on robot</text>
<text x="138.4" y="218.8" font-size="5.9" fill="#000" textLength="12.0" lengthAdjust="spacingAndGlyphs">Loop</text>
<text x="138.4" y="228.8" font-size="5.9" fill="#000" textLength="42.3" lengthAdjust="spacingAndGlyphs">Show instructions</text>
<text x="138.4" y="239.0" font-size="5.9" fill="#000" textLength="29.7" lengthAdjust="spacingAndGlyphs">Display path</text>
<text x="225.5" y="239.0" font-size="5.9" fill="#000" textLength="6.3" lengthAdjust="spacingAndGlyphs">F7</text>
<text x="138.4" y="248.9" font-size="5.9" fill="#000" textLength="17.4" lengthAdjust="spacingAndGlyphs">Locked</text>
<rect x="136.5" y="253.4" width="114" height="0.5" fill="#d0d0d0"/>
<text x="138.4" y="262.9" font-size="5.9" fill="#000" textLength="27.3" lengthAdjust="spacingAndGlyphs">Check path</text>
<text x="225.5" y="262.9" font-size="5.9" fill="#000" textLength="6.3" lengthAdjust="spacingAndGlyphs">F5</text>
<path d="M126.6,260.7 l2.2,2.4 l3.6,-4.8" fill="none" stroke="#149a14" stroke-width="1.45"/>
<text x="138.4" y="273.2" font-size="5.9" fill="#000" textLength="62.4" lengthAdjust="spacingAndGlyphs">Check path and Collisions</text>
<text x="225.5" y="273.2" font-size="5.9" fill="#000" textLength="20.3" lengthAdjust="spacingAndGlyphs">Shift+F5</text>
<path d="M126.6,270.9 l2.2,2.4 l3.6,-4.8" fill="none" stroke="#149a14" stroke-width="1.45"/>
<rect x="136.5" y="277.8" width="114" height="0.5" fill="#d0d0d0"/>
<text x="138.4" y="287.2" font-size="5.9" fill="#000" textLength="69.6" lengthAdjust="spacingAndGlyphs">Generate robot program as...</text>
<text x="225.5" y="287.2" font-size="5.9" fill="#000" textLength="20.3" lengthAdjust="spacingAndGlyphs">Shift+F6</text>
<path d="M126.6,281.5 h4 l1.8,1.8 v5.6 h-5.8 z" fill="#fafafa" stroke="#9a9a9a" stroke-width="0.45"/>
<rect x="127.0" y="281.7" width="3.4" height="0.8" fill="#b59ce6"/>
<rect x="127.6" y="284.0" width="3.8" height="3.6" fill="#d4d4d4"/>
<rect x="127.6" y="284.8" width="3.8" height="0.4" fill="#8a8a8a"/><rect x="127.6" y="286.4" width="3.8" height="0.4" fill="#8a8a8a"/>
<text x="138.4" y="297.1" font-size="5.9" fill="#000" textLength="57.9" lengthAdjust="spacingAndGlyphs">Generate robot program</text>
<text x="225.5" y="297.1" font-size="5.9" fill="#000" textLength="6.3" lengthAdjust="spacingAndGlyphs">F6</text>
<path d="M126.6,291.3 h4 l1.8,1.8 v5.6 h-5.8 z" fill="#fafafa" stroke="#9a9a9a" stroke-width="0.45"/>
<rect x="127.0" y="291.5" width="3.4" height="0.8" fill="#b59ce6"/>
<rect x="127.6" y="293.8" width="3.8" height="3.6" fill="#d4d4d4"/>
<rect x="127.6" y="294.6" width="3.8" height="0.4" fill="#8a8a8a"/><rect x="127.6" y="296.2" width="3.8" height="0.4" fill="#8a8a8a"/>
<text x="138.4" y="306.9" font-size="5.9" fill="#000" textLength="54.0" lengthAdjust="spacingAndGlyphs">Send program to robot</text>
<text x="225.5" y="306.9" font-size="5.9" fill="#000" textLength="17.9" lengthAdjust="spacingAndGlyphs">Ctrl+F6</text>
<path d="M126.6,301.1 h4 l1.8,1.8 v5.6 h-5.8 z" fill="#fafafa" stroke="#9a9a9a" stroke-width="0.45"/>
<rect x="127.0" y="301.3" width="3.4" height="0.8" fill="#b59ce6"/>
<rect x="127.6" y="303.6" width="3.8" height="3.6" fill="#d4d4d4"/>
<rect x="127.6" y="304.4" width="3.8" height="0.4" fill="#8a8a8a"/><rect x="127.6" y="306.0" width="3.8" height="0.4" fill="#8a8a8a"/>
<rect x="136.5" y="311.1" width="114" height="0.5" fill="#d0d0d0"/>
<text x="138.4" y="320.9" font-size="5.9" fill="#000" textLength="14.4" lengthAdjust="spacingAndGlyphs">Robot</text>
<path d="M126.9,317.7 l2.6,-2.9 l2.7,0.5 l-0.5,1.6 l-2.1,-0.3 l-1.1,2.1 l1.6,1 l0.3,2.9 h-4 l0.3,-2.4 z" fill="#e8620e"/>
<rect x="126.5" y="321.8" width="5.2" height="1.2" fill="#5a2a08"/>
<text x="138.4" y="331.1" font-size="5.9" fill="#000" textLength="50.5" lengthAdjust="spacingAndGlyphs">Select Post Processor</text>
<path d="M126.6,325.3 h4 l1.8,1.8 v5.6 h-5.8 z" fill="#1c1c14"/>
<rect x="136.5" y="335.4" width="114" height="0.5" fill="#d0d0d0"/>
<text x="138.4" y="345.1" font-size="5.9" fill="#000" textLength="46.8" lengthAdjust="spacingAndGlyphs">Export Simulation...</text>
<circle cx="129.5" cy="342.8" r="2.9" fill="#f4c838"/>
<path d="M128.0,344.6 l3,0 l-1.5,2 z" fill="#f0a020"/>
<rect x="136.5" y="349.8" width="114" height="0.5" fill="#d0d0d0"/>
<text x="138.4" y="359.4" font-size="5.9" fill="#000" textLength="36.0" lengthAdjust="spacingAndGlyphs">Add Instruction</text>
<path d="M126.5,356.5 h2.2 v-2.4 h1.6 v2.4 h2.2 v1.6 h-2.2 v2.4 h-1.6 v-2.4 h-2.2 z" fill="#18a818"/>
<rect x="136.5" y="363.9" width="114" height="0.5" fill="#d0d0d0"/>
<text x="138.4" y="373.7" font-size="5.9" fill="#000" textLength="20.4" lengthAdjust="spacingAndGlyphs">Rename</text>
<text x="225.5" y="373.7" font-size="5.9" fill="#000" textLength="6.3" lengthAdjust="spacingAndGlyphs">F2</text>
<text x="138.4" y="383.6" font-size="5.9" fill="#000" textLength="19.5" lengthAdjust="spacingAndGlyphs">Reorder</text>
<rect x="136.5" y="388.1" width="114" height="0.5" fill="#d0d0d0"/>
<text x="138.4" y="397.9" font-size="5.9" fill="#000" textLength="15.6" lengthAdjust="spacingAndGlyphs">Delete</text>
<text x="225.5" y="397.9" font-size="5.9" fill="#000" textLength="8.1" lengthAdjust="spacingAndGlyphs">Del</text>
<path d="M127.0,393.3 l5,5 M132.0,393.3 l-5,5" stroke="#e02828" stroke-width="1.6" fill="none"/>
<polygon points="246.5,317.3 248.4,318.9 246.5,320.5" fill="#000"/>
<polygon points="246.5,355.7 248.4,357.3 246.5,358.9" fill="#000"/>
<polygon points="246.5,379.9 248.4,381.5 246.5,383.1" fill="#000"/>
<rect x="247" y="313.4" width="88" height="21.1" fill="#f2f2f2" stroke="#a8a8a8" stroke-width="0.6"/>
<rect x="248" y="314.5" width="86" height="9.2" fill="#90c8f6"/>
<text x="267.0" y="321.1" font-size="5.9" fill="#000" textLength="22.6" lengthAdjust="spacingAndGlyphs">Turntable</text>
<text x="267.0" y="331.1" font-size="5.9" fill="#000" textLength="50.9" lengthAdjust="spacingAndGlyphs">ABB IRB 2600-12/1.85</text>
<circle cx="255" cy="317.6" r="2" fill="#f2d640" stroke="#6a5a10" stroke-width="0.5"/>
<circle cx="258.4" cy="320.6" r="2" fill="#f2d640" stroke="#6a5a10" stroke-width="0.5"/>
<circle cx="255" cy="317.6" r="0.7" fill="#8a7a20"/><circle cx="258.4" cy="320.6" r="0.7" fill="#8a7a20"/>
<path d="M254.2,327.8 l2.6,-2.9 l2.7,0.5 l-0.5,1.6 l-2.1,-0.3 l-1.1,2.1 l1.6,1 l0.3,2.9 h-4 l0.3,-2.4 z" fill="#e8620e"/>
<rect x="253.6" y="331.9" width="5.2" height="1.2" fill="#5a2a08"/>
<rect x="247" y="312.2" width="50.3" height="12.2" rx="6.1" ry="6.1" fill="none" stroke="#d93c3c" stroke-width="1.2"/>
<path d="M308.3,319.3 l0,8.6 l2,-1.9 l1.5,3.3 l1.3,-0.6 l-1.5,-3.2 l2.7,0 z" fill="#ffffff" stroke="#222" stroke-width="0.55"/>
</g>
</svg>
</body></html>
